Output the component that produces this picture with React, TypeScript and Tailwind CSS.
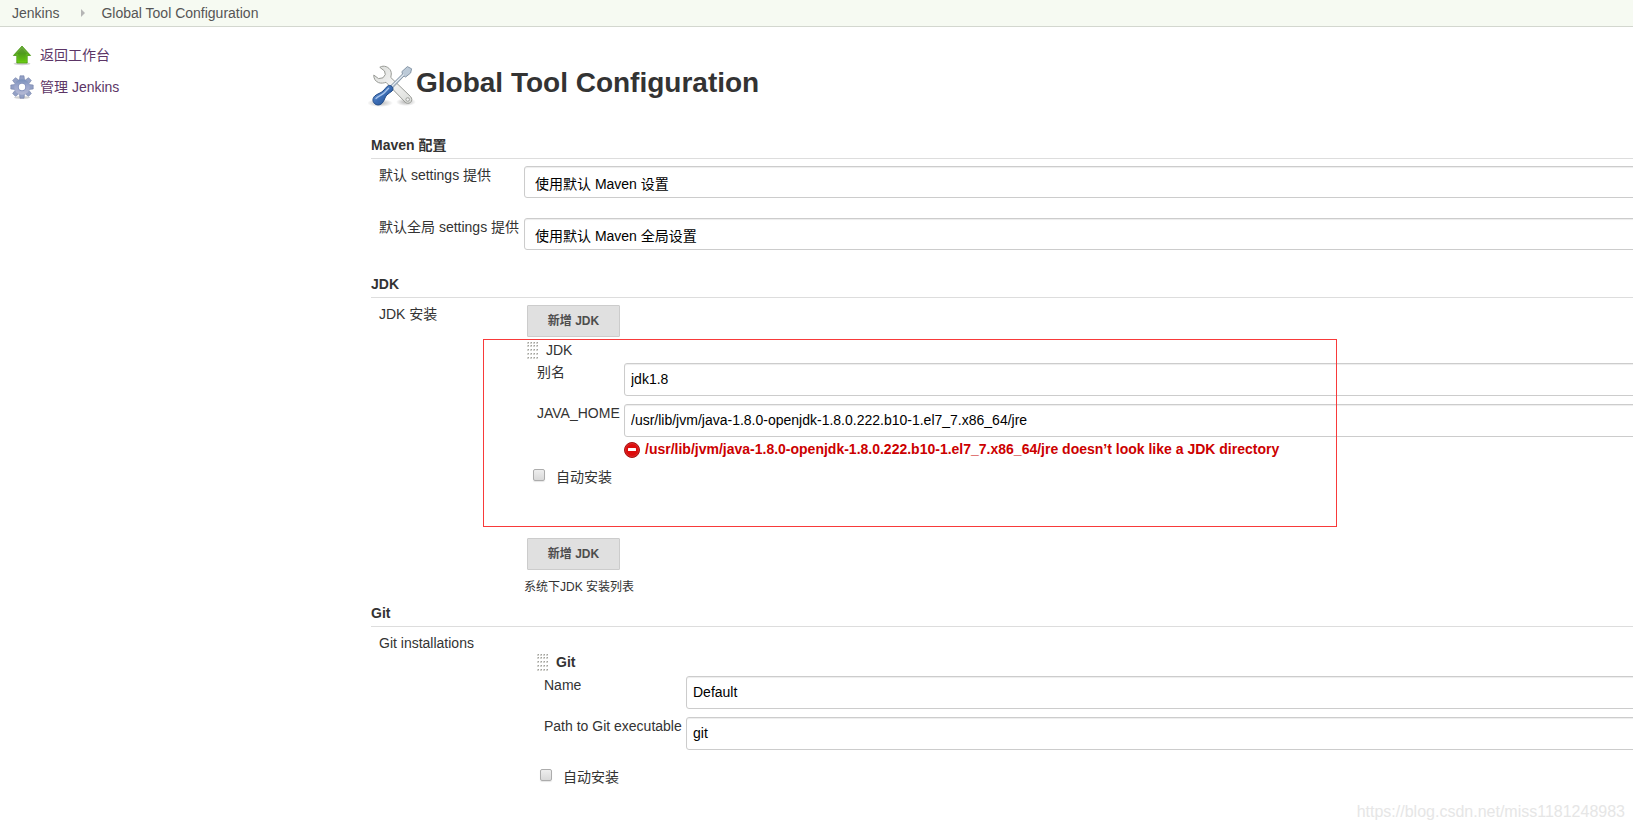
import React from 'react';

const UpIcon = () => (
  <svg className="w-6 h-6 shrink-0" viewBox="0 0 24 24" aria-hidden="true">
    <defs>
      <linearGradient id="up-fill" x1="0" y1="0" x2="0" y2="1">
        <stop offset="0" stopColor="#6a9f45" />
        <stop offset="0.45" stopColor="#4f9c1c" />
        <stop offset="1" stopColor="#66cc0c" />
      </linearGradient>
    </defs>
    <ellipse cx="12" cy="20.8" rx="8.5" ry="1.4" fill="#000" opacity="0.18" />
    <path d="M12 3 L20.6 12.5 H17.2 V20 H6.8 V12.5 H3.4 Z" fill="url(#up-fill)" stroke="#4a9a12" strokeWidth="0.8" strokeLinejoin="round" />
    <path d="M12 4.6 L18.2 11.6 H16.2 V19 H7.8 V11.6 H5.8 Z" fill="none" stroke="#8ae234" strokeWidth="0.6" opacity="0.5" />
  </svg>
);

const teeth = [0, 45, 90, 135, 180, 225, 270, 315];

const GearIcon = () => (
  <svg className="w-6 h-6 shrink-0" viewBox="0 0 24 24" aria-hidden="true">
    <defs>
      <linearGradient id="gear-fill" gradientUnits="userSpaceOnUse" x1="12" y1="0" x2="12" y2="24">
        <stop offset="0" stopColor="#5f7fae" />
        <stop offset="0.45" stopColor="#9ba6cc" />
        <stop offset="1" stopColor="#c0c2d8" />
      </linearGradient>
    </defs>
    <ellipse cx="12" cy="22.4" rx="8" ry="1.4" fill="#000" opacity="0.18" />
    <g fill="#93a0c5" stroke="#7280a8" strokeWidth="0.6">
      {teeth.map((angle) => (
        <path key={angle} d="M9.4 5.5 L10 0.8 H14 L14.6 5.5 Z" transform={`rotate(${angle} 12 12)`} />
      ))}
    </g>
    <circle cx="12" cy="12" r="7.8" fill="url(#gear-fill)" />
    <circle cx="12" cy="12" r="4.2" fill="#8794bd" />
    <circle cx="12" cy="12" r="3.2" fill="#fff" />
  </svg>
);

const ToolsIcon = () => (
  <svg className="w-12 h-12 shrink-0" viewBox="0 0 48 48" aria-hidden="true">
    <defs>
      <linearGradient id="wrench-fill" x1="0" y1="0" x2="1" y2="1">
        <stop offset="0" stopColor="#d8dad7" />
        <stop offset="0.5" stopColor="#f4f4f3" />
        <stop offset="1" stopColor="#d9dbd8" />
      </linearGradient>
      <linearGradient id="handle-fill" x1="0" y1="0" x2="1" y2="1">
        <stop offset="0" stopColor="#7ba4dc" />
        <stop offset="0.5" stopColor="#3b6db5" />
        <stop offset="1" stopColor="#204a87" />
      </linearGradient>
      <radialGradient id="tool-shadow">
        <stop offset="0" stopColor="#000" stopOpacity="0.3" />
        <stop offset="1" stopColor="#000" stopOpacity="0" />
      </radialGradient>
    </defs>
    <ellipse cx="12" cy="43" rx="13" ry="4" fill="url(#tool-shadow)" />
    <ellipse cx="38" cy="42" rx="10" ry="4" fill="url(#tool-shadow)" />
    <path
      d="M15 6.2 C19.5 6 23.5 9.5 23.3 14 C23.2 15.5 22.8 16.5 22.8 17.5 L42.5 36.5 C44.3 38.5 44.2 41 42.5 42.4 C40.8 43.8 38.5 43.6 37 42 L18 22.3 C16 23 13 23.6 10.5 22.6 C7.5 21.4 5.5 18.5 5.8 15 L10.5 18.6 L15 17.8 L17.3 14.5 L16.5 11 L11.8 7.3 C12.8 6.6 14 6.3 15 6.2 Z"
      fill="url(#wrench-fill)"
      stroke="#999b96"
      strokeWidth="1"
      strokeLinejoin="round"
    />
    <circle cx="39.7" cy="39.5" r="1.8" fill="#eee" stroke="#999b96" strokeWidth="0.9" />
    <path d="M22.5 26 L34.5 14 L33.9 11.6 L39.4 6.6 L43.6 8.8 L42.6 13 L37.6 17 L36 16 L24.5 28 Z" fill="#bccad8" stroke="#8797a7" strokeWidth="1" strokeLinejoin="round" />
    <path d="M23.8 26 L35.8 14.6" stroke="#eef2f6" strokeWidth="1" />
    <path
      d="M19.3 26.3 C20.6 25 22.6 25.2 24 26.6 C25.3 28 25.3 29.8 24 31 C22.4 32.6 20.4 33.4 18.8 35 C16.6 37.3 16.6 40.6 14 43.3 C11.6 45.6 8.3 45.4 6.3 43.3 C4.3 41.2 4.5 38.2 6.8 36 C9.3 33.6 12.6 33.4 15 31 C16.8 29.3 17.6 27.9 19.3 26.3 Z"
      fill="url(#handle-fill)"
      stroke="#204a87"
      strokeWidth="1"
    />
    <path d="M8 38.5 C10.5 35.8 13.8 35.5 16.3 32.7 L20.6 28.2" stroke="#a5c3ec" strokeWidth="1.4" strokeLinecap="round" fill="none" />
  </svg>
);

const ErrorIcon = () => (
  <svg className="w-4 h-4 shrink-0" viewBox="0 0 16 16" aria-hidden="true">
    <circle cx="8" cy="8" r="7.5" fill="#c40000" stroke="#a81414" strokeWidth="1" />
    <circle cx="8" cy="8" r="6.5" fill="#dc0c0c" stroke="#e04848" strokeWidth="0.6" />
    <rect x="4" y="6" width="8" height="3" rx="0.5" fill="#fff" />
  </svg>
);

const GripIcon = () => (
  <svg className="w-3 h-[18px] shrink-0" viewBox="0 0 12 18" aria-hidden="true" shapeRendering="crispEdges">
    {[1, 4, 8, 12, 16].map((y) =>
      [0, 3, 6, 9].map((x) => (
        <g key={`${x}-${y}`}>
          <rect x={x} y={y} width="2" height="2" fill="#d4d4d0" />
          <rect x={x + 1} y={y} width="1" height="1" fill="#a0a09c" />
        </g>
      ))
    )}
  </svg>
);

interface FieldProps {
  id: string;
  label: string;
  value: string;
  labelClass: string;
}

const TextField: React.FC<FieldProps> = ({ id, label, value, labelClass }) => (
  <div className="flex items-start">
    <label htmlFor={id} className={`shrink-0 ${labelClass}`}>{label}</label>
    <input
      id={id}
      type="text"
      defaultValue={value}
      className="flex-1 min-w-0 h-[33px] px-1.5 pb-0.5 text-black bg-white border border-[#ccc] rounded-[3px] shadow-[inset_0_1px_1px_rgba(0,0,0,0.075)]"
    />
  </div>
);

const SelectField: React.FC<FieldProps> = ({ id, label, value, labelClass }) => (
  <div className="flex items-start pl-2">
    <label htmlFor={id} className={`shrink-0 ${labelClass}`}>{label}</label>
    <select
      id={id}
      className="appearance-none flex-1 min-w-0 h-8 pt-1 px-2.5 text-black bg-white border border-[#ccc] rounded-[3px] shadow-[inset_0_1px_1px_rgba(0,0,0,0.075)]"
    >
      <option>{value}</option>
    </select>
  </div>
);

const AutoInstall: React.FC<{ id: string }> = ({ id }) => (
  <div className="flex items-start gap-[11px]">
    <input
      id={id}
      type="checkbox"
      className="appearance-none mt-px w-3 h-3 border border-[#acacac] rounded-[2px] bg-linear-to-b from-[#eee] to-[#d9d9d9] shadow-[0_1px_1px_rgba(0,0,0,0.1)]"
    />
    <label htmlFor={id}>自动安装</label>
  </div>
);

const AddButton = () => (
  <button type="button" className="block ml-[3px] w-[93px] h-8 text-xs font-bold text-[#4d4d4d] bg-[#e0e0e0] border border-[#ccc] rounded-[1px]">
    新增 JDK
  </button>
);

const SectionTitle: React.FC<{ children: React.ReactNode }> = ({ children }) => (
  <h2 className="pb-[3px] mb-[7px] leading-5 font-bold border-b border-[#ddd]">{children}</h2>
);

const App: React.FC = () => {
  return (
    <div className="relative min-h-screen overflow-hidden bg-white text-[#333] text-sm leading-[18px] font-['Liberation_Sans','Noto_Sans_CJK_SC',sans-serif]">
      {/* Breadcrumbs */}
      <nav className="flex items-center h-[27px] px-3 bg-[#f6faf2] border-b border-[#d3d7cf] text-[#555]">
        <a href="#">Jenkins</a>
        <svg className="w-1 h-2 ml-[22px] mr-4" viewBox="0 0 4 8" aria-hidden="true">
          <path d="M0 0 L4 4 L0 8 Z" fill="#b5b5b5" />
        </svg>
        <a href="#">Global Tool Configuration</a>
      </nav>

      <div className="flex items-start">
        {/* Side panel */}
        <aside className="w-[371px] shrink-0 pl-2.5 pt-4 flex flex-col gap-2 text-[#5c3566]">
          <a href="#" className="flex items-center gap-1.5">
            <UpIcon />
            返回工作台
          </a>
          <a href="#" className="flex items-center gap-1.5">
            <GearIcon />
            管理 Jenkins
          </a>
        </aside>

        {/* Form runs past the right edge of the window */}
        <main className="flex-1 min-w-0 -mr-4 pt-8">
          <h1 className="flex items-end -ml-[3px] mb-7 h-12 text-[28px] leading-[48px] font-bold">
            <span className="-mb-px">
              <ToolsIcon />
            </span>
            Global Tool Configuration
          </h1>

          <section className="mb-6">
            <SectionTitle>Maven 配置</SectionTitle>
            <div className="flex flex-col gap-5">
              <SelectField id="settings" label="默认 settings 提供" value="使用默认 Maven 设置" labelClass="w-[145px]" />
              <SelectField id="global-settings" label="默认全局 settings 提供" value="使用默认 Maven 全局设置" labelClass="w-[145px]" />
            </div>
          </section>

          <section className="mb-[7px]">
            <SectionTitle>JDK</SectionTitle>
            <div className="flex items-start pl-2">
              <div className="w-[145px] shrink-0">JDK 安装</div>
              <div className="flex-1 min-w-0">
                <AddButton />
                <div className="relative mt-1 mb-3 ml-[3px] pb-10">
                  <div className="flex gap-[7px] mb-1">
                    <GripIcon />
                    <span>JDK</span>
                  </div>
                  <div className="flex flex-col gap-2 pl-2.5">
                    <TextField id="jdk-name" label="别名" value="jdk1.8" labelClass="w-[87px]" />
                    <TextField
                      id="java-home"
                      label="JAVA_HOME"
                      value="/usr/lib/jvm/java-1.8.0-openjdk-1.8.0.222.b10-1.el7_7.x86_64/jre"
                      labelClass="w-[87px]"
                    />
                  </div>
                  <div className="flex items-end gap-[5px] mt-[3px] mb-2.5 ml-[97px] font-bold text-[#c00]">
                    <ErrorIcon />
                    /usr/lib/jvm/java-1.8.0-openjdk-1.8.0.222.b10-1.el7_7.x86_64/jre doesn’t look like a JDK directory
                  </div>
                  <div className="pl-1.5">
                    <AutoInstall id="jdk-auto" />
                  </div>
                  <div className="absolute -top-0.5 -bottom-px -left-11 w-[854px] border border-[#f83a3a] pointer-events-none" />
                </div>
                <AddButton />
                <p className="mt-2 text-xs leading-[18px]">系统下JDK 安装列表</p>
              </div>
            </div>
          </section>

          <section>
            <SectionTitle>Git</SectionTitle>
            <div className="flex items-start pl-2">
              <div className="w-[145px] shrink-0">Git installations</div>
              <div className="flex-1 min-w-0 pt-[19px] pl-[13px]">
                <div className="flex gap-[7px] mb-[5px] font-bold">
                  <GripIcon />
                  <span>Git</span>
                </div>
                <div className="flex flex-col gap-2 pl-[7px] mb-[18px]">
                  <TextField id="git-name" label="Name" value="Default" labelClass="w-[142px]" />
                  <TextField id="git-path" label="Path to Git executable" value="git" labelClass="w-[142px]" />
                </div>
                <div className="pl-[3px]">
                  <AutoInstall id="git-auto" />
                </div>
              </div>
            </div>
          </section>
        </main>
      </div>

      <div className="absolute right-2 bottom-1.5 text-base leading-6 text-[#e6e6e6]">https://blog.csdn.net/miss1181248983</div>
    </div>
  );
};

export default App;
